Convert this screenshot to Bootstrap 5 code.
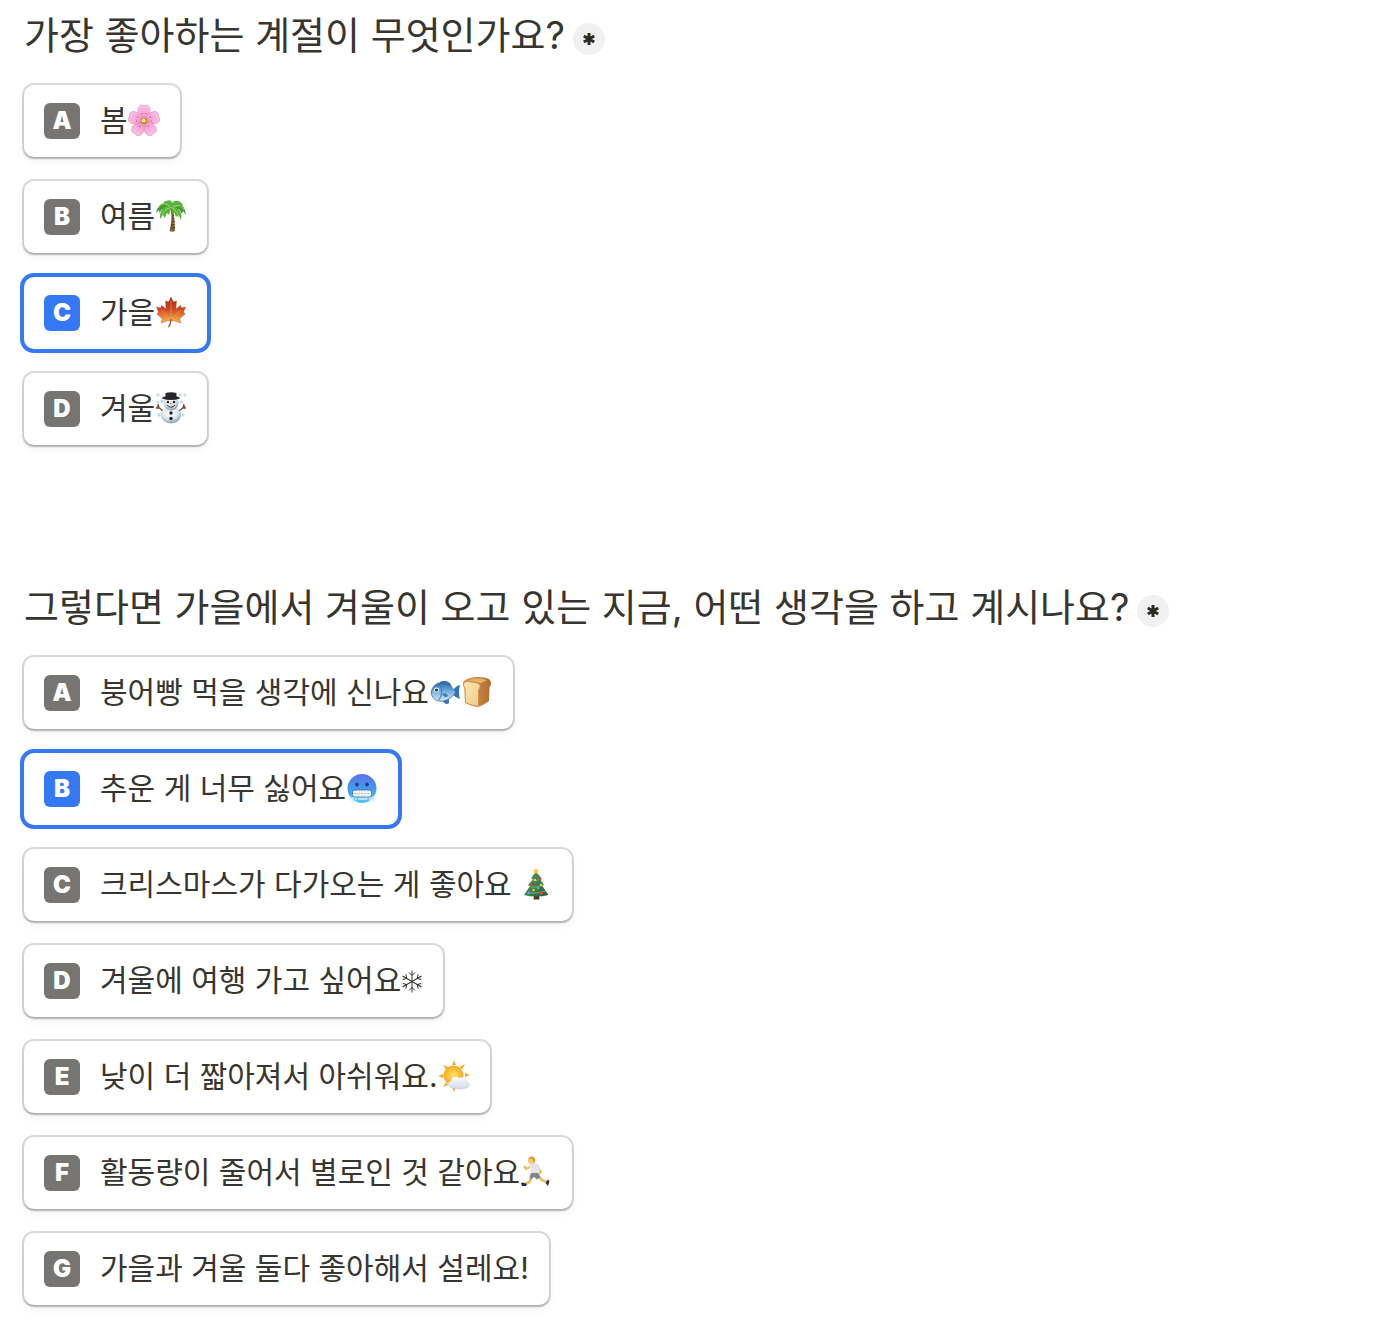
<!DOCTYPE html>
<html lang="ko">
<head>
<meta charset="utf-8">
<meta name="viewport" content="width=device-width, initial-scale=1">
<title>계절 설문</title>
<link href="https://cdn.jsdelivr.net/npm/bootstrap@5.3.0/dist/css/bootstrap.min.css" rel="stylesheet">
<style>
  body { font-family: Inter, "Noto Sans CJK KR", sans-serif; color: #37352f; background: #fff; }
  .survey { padding-top: 11px; padding-bottom: 16px; }
  .question + .question { margin-top: 138px; }
  .question-title { font-size: 38px; line-height: 48px; margin-bottom: 26px; }
  .required-mark { width: 32px; height: 32px; background: #f1f1f1; }
  .choices { gap: 24px; }
  .choice { gap: 20px; padding: 18px 20px; border-radius: 10px; font-size: 30px; cursor: pointer; background: #fff;
    box-shadow: 0 0 0 2px rgba(0,0,0,.14), 0 2px 2px rgba(0,0,0,.15), 0 4px 8px rgba(0,0,0,.06); }
  .choice-key { width: 36px; height: 36px; border-radius: 6px; background: #777571; color: #fff; font-size: 24px; line-height: 36px; font-weight: 900; }
  .choice-text { line-height: 34px; padding-bottom: 2px; }
  .btn-check:checked + .choice { box-shadow: 0 0 0 4px #3578f6; }
  .btn-check:checked + .choice .choice-key { background: #3578f6; }
  .emoji { width: 32px; height: 32px; }
  .emoji-narrow { width: 22px; height: 32px; }
</style>
<script src="https://cdn.jsdelivr.net/npm/bootstrap@5.3.0/dist/js/bootstrap.bundle.min.js"></script>
</head>
<body>
<svg width="0" height="0" class="position-absolute" aria-hidden="true">
  <defs>
    <radialGradient id="petalFill" gradientUnits="userSpaceOnUse" cx="16" cy="17" r="16"><stop offset="0" stop-color="#e07fb2"/><stop offset=".4" stop-color="#f4a0d0"/><stop offset="1" stop-color="#fac4e6"/></radialGradient>
    <linearGradient id="leafFill" x1="0" y1="0" x2="0" y2="1"><stop offset="0" stop-color="#b8231a"/><stop offset=".45" stop-color="#cf4320"/><stop offset="1" stop-color="#f6bb4e"/></linearGradient>
    <radialGradient id="snowFill" cx=".45" cy=".35" r=".65"><stop offset="0" stop-color="#fff"/><stop offset=".6" stop-color="#dde8ef"/><stop offset="1" stop-color="#869dac"/></radialGradient>
    <linearGradient id="fishFill" x1="0" y1="0" x2="0" y2="1"><stop offset="0" stop-color="#2f6fae"/><stop offset=".5" stop-color="#79b4e2"/><stop offset="1" stop-color="#d3e8f4"/></linearGradient>
    <linearGradient id="crumbFill" x1="0" y1="0" x2="1" y2="1"><stop offset="0" stop-color="#fbe6b4"/><stop offset="1" stop-color="#f0cb88"/></linearGradient>
    <linearGradient id="crustFill" x1="0" y1="0" x2="1" y2="0"><stop offset="0" stop-color="#dca055"/><stop offset="1" stop-color="#b06c30"/></linearGradient>
    <linearGradient id="coldFill" x1="0" y1="0" x2="0" y2="1"><stop offset="0" stop-color="#5b74e6"/><stop offset=".5" stop-color="#4797ef"/><stop offset="1" stop-color="#4fc8f6"/></linearGradient>
    <radialGradient id="sunFill"><stop offset="0" stop-color="#ffe45c"/><stop offset="1" stop-color="#f7a928"/></radialGradient>
    <linearGradient id="cloudFill" x1="0" y1="0" x2="0" y2="1"><stop offset="0" stop-color="#fff"/><stop offset="1" stop-color="#cfd9e4"/></linearGradient>
    <linearGradient id="treeFill" x1="0" y1="0" x2="1" y2="1"><stop offset="0" stop-color="#5a9c62"/><stop offset="1" stop-color="#1f6138"/></linearGradient>
    <path id="petal" d="M16 16.500C10.500 13 9 7 10.500 3.500C11.500.8 14.500.3 16 2C17.500.3 20.500.8 21.500 3.500C23 7 21.500 13 16 16.500Z"/>
    <g id="asterisk" stroke="#2c2a25" stroke-width="3"><path d="M7 1V13M1.800 4L12.200 10M1.800 10L12.200 4"/></g>
  </defs>
</svg>

<main class="survey container-fluid px-4">
<form>
  <fieldset class="question">
    <legend class="question-title d-flex align-items-center gap-2">가장 좋아하는 계절이 무엇인가요?
      <span class="required-mark rounded-circle d-inline-flex align-items-center justify-content-center flex-shrink-0 mt-2" role="img" aria-label="필수"><svg width="14" height="14" viewBox="0 0 14 14"><use href="#asterisk"/></svg></span>
    </legend>
    <div class="choices d-flex flex-column align-items-start">
      <div>
        <input class="btn-check" type="radio" name="season" id="season-a">
        <label class="choice d-flex align-items-center" for="season-a"><span class="choice-key text-center flex-shrink-0">A</span><span class="choice-text d-flex align-items-center">봄<svg class="emoji" viewBox="0 0 32 32">
          <g fill="url(#petalFill)" stroke="#dc80b4" stroke-width=".5"><use href="#petal"/><use href="#petal" transform="rotate(72 16 17)"/><use href="#petal" transform="rotate(144 16 17)"/><use href="#petal" transform="rotate(216 16 17)"/><use href="#petal" transform="rotate(288 16 17)"/></g>
          <g fill="#a8386a"><circle cx="14" cy="9.500" r=".6"/><circle cx="18" cy="9.500" r=".6"/><circle cx="22.500" cy="13" r=".6"/><circle cx="23.500" cy="17" r=".6"/><circle cx="20.500" cy="22.500" r=".6"/><circle cx="11.500" cy="22.500" r=".6"/><circle cx="8.500" cy="17" r=".6"/><circle cx="9.500" cy="13" r=".6"/></g>
          <circle cx="16" cy="17" r="3.300" fill="#c98a2c"/><circle cx="15.700" cy="16.500" r="2.100" fill="#fbe26a"/></svg></span></label>
      </div>
      <div>
        <input class="btn-check" type="radio" name="season" id="season-b">
        <label class="choice d-flex align-items-center" for="season-b"><span class="choice-key text-center flex-shrink-0">B</span><span class="choice-text d-flex align-items-center">여름<svg class="emoji" viewBox="0 0 32 32">
          <path d="M15 8C17.500 15 16.500 23 14.500 31Q17 32.500 20 31C19.700 23 19.500 15 17.500 8Z" fill="#8a6238"/>
          <path d="M16.500 13L18.500 12.500M17 16L19 15.500M16.800 19L19.200 18.500M16.500 22L19.500 21.500M16 25L19.500 24.500M15.500 28L19.800 27.500" stroke="#513518" stroke-width="1"/>
          <path d="M16 8C12-1 3 3 1 13L4 10L4.500 13L7 9L8 11L11 7L13 10ZM16 8C23-2 30 5 31 15L28 11L27 14L24 9L22 12L20 8L17 10Z" fill="#429a35"/>
          <path d="M16 8C11 5 4 9 5 19L8 15L9.500 18L12 13L14 15ZM17 8C22 6 28 12 26 20L23.500 15L21 17L19 12L17 14ZM16 9C10 5 6 2 11 1C15-1 17 1 17 3C20-1 26 1 28 5Z" fill="#57b53e"/>
          <path d="M16 8C12 2 6 3 3 8M17 8C22 3 27 6 29 10M15 8C11 8 8 12 7 16M17 8C21 10 23 13 24 17" fill="none" stroke="#9bda62" stroke-width="1"/></svg></span></label>
      </div>
      <div>
        <input class="btn-check" type="radio" name="season" id="season-c" checked>
        <label class="choice d-flex align-items-center" for="season-c"><span class="choice-key text-center flex-shrink-0">C</span><span class="choice-text d-flex align-items-center">가을<svg class="emoji" viewBox="0 0 32 32">
          <path d="M16 1L18.500 6L21.500 5L20.800 13L25.500 9.500L26.500 12L30.500 11L28.500 16L30 18L24.500 23L26 27L18 24.500L16 25L13 24.500L6 27L7.500 23L2 18L3.500 16L1.500 11L5.500 12L6.500 9.500L11.200 13L10.500 5L13.500 6Z" fill="url(#leafFill)" stroke="#a8401f" stroke-width=".4"/>
          <path d="M16 4V24M16 23L6 14M16 23L26 14M16 23L8 25M16 23L24 25" fill="none" stroke="#f0a850" stroke-width=".6"/><path d="M16 23Q16 28 13.500 31" fill="none" stroke="#a4562a" stroke-width="1.300"/></svg></span></label>
      </div>
      <div>
        <input class="btn-check" type="radio" name="season" id="season-d">
        <label class="choice d-flex align-items-center" for="season-d"><span class="choice-key text-center flex-shrink-0">D</span><span class="choice-text d-flex align-items-center">겨울<svg class="emoji" viewBox="0 0 32 32">
          <g fill="#b5ddf8"><circle cx="3" cy="3" r="1.700"/><circle cx="7" cy="9" r="1.700"/><circle cx="3" cy="10" r="1.300"/><circle cx="25" cy="3" r="1.600"/><circle cx="30" cy="3" r="1.400"/><circle cx="26" cy="10" r="1.600"/><circle cx="4" cy="23" r="1.700"/><circle cx="28" cy="23" r="1.500"/></g>
          <path d="M8 19L2 14M4 16L1 16M4 16L3 12M24 19L30 14M28 16L31 16M28 16L29 12" stroke="#754f35" stroke-width="1.400"/>
          <ellipse cx="16" cy="23" rx="10" ry="8.500" fill="url(#snowFill)"/><circle cx="16" cy="11" r="7.500" fill="url(#snowFill)"/>
          <path d="M10.500 1Q16-.5 21.500 1L21.500 4.500Q25 5 25 6.500Q16 9.500 7 6.500Q7 5 10.500 4.500Z" fill="#28262a"/>
          <g fill="#222"><circle cx="13" cy="10" r="1.300"/><circle cx="19" cy="10" r="1.300"/><circle cx="16" cy="21" r="1.700"/><circle cx="16" cy="26.500" r="1.700"/></g><path d="M15 10.500L18 12L15 12.500Z" fill="#ed7a31"/><path d="M12 13Q16 17.500 20 13" fill="none" stroke="#333"/></svg></span></label>
      </div>
    </div>
  </fieldset>

  <fieldset class="question">
    <legend class="question-title d-flex align-items-center gap-2">그렇다면 가을에서 겨울이 오고 있는 지금, 어떤 생각을 하고 계시나요?
      <span class="required-mark rounded-circle d-inline-flex align-items-center justify-content-center flex-shrink-0 mt-2" role="img" aria-label="필수"><svg width="14" height="14" viewBox="0 0 14 14"><use href="#asterisk"/></svg></span>
    </legend>
    <div class="choices d-flex flex-column align-items-start">
      <div>
        <input class="btn-check" type="radio" name="thought" id="thought-a">
        <label class="choice d-flex align-items-center" for="thought-a"><span class="choice-key text-center flex-shrink-0">A</span><span class="choice-text d-flex align-items-center">붕어빵 먹을 생각에 신나요<svg class="emoji" viewBox="0 0 32 32">
          <path d="M9 8Q14 2 21 7L23 11ZM13 24Q17 30 20 27L20 23ZM23 15Q28 9 31 9Q29 16 31 23Q27 22 23 18Z" fill="#3973ad"/>
          <path d="M2 17C3 10 8 6 14 7C20 8 24 12 27 16C22 23 16 26 10 25C5 24 3 21 2 17Z" fill="url(#fishFill)" stroke="#315f90" stroke-width=".7"/>
          <path d="M11 9Q15 16 10 24" fill="none" stroke="#4079ad"/><path d="M13 18Q18 16 19 20Q16 23 13 18Z" fill="#427fb8"/><circle cx="7.500" cy="14" r="2.400" fill="#fff"/><circle cx="7.500" cy="14" r="1.500" fill="#17263b"/></svg><svg class="emoji" viewBox="0 0 32 32">
          <path d="M2 7Q2 4 9 2Q17 0 25 2Q30 3 30 7Q30 10 28.500 11L28 25Q23 29 17 31Q10 30 4 27L3.500 12Q2 10 2 7Z" fill="url(#crustFill)"/>
          <path d="M2.500 8Q3 5 7 5.500L16 7Q20 8 19 11Q18.500 13 17.500 14V30.500Q10 29.500 4.500 26.500L4 12Q2.500 10.500 2.500 8Z" fill="url(#crumbFill)" stroke="#c98b45" stroke-width=".8"/><path d="M7 4.500Q16 1 26 4L20 7Z" fill="#e6b267"/></svg></span></label>
      </div>
      <div>
        <input class="btn-check" type="radio" name="thought" id="thought-b" checked>
        <label class="choice d-flex align-items-center" for="thought-b"><span class="choice-key text-center flex-shrink-0">B</span><span class="choice-text d-flex align-items-center">추운 게 너무 싫어요<svg class="emoji" viewBox="0 0 32 32">
          <circle cx="16" cy="16.500" r="14.500" fill="url(#coldFill)"/><ellipse cx="11" cy="12.500" rx="1.700" ry="2" fill="#173e82"/><ellipse cx="21" cy="12.500" rx="1.700" ry="2" fill="#173e82"/>
          <path d="M3 24L4 31L5.500 27L7 32L8.500 26L10 30L11.500 26L13 28H21L22.500 26L24 31L25.500 26L27 31L29 23L25 25H6Z" fill="#c9effb" opacity=".8"/>
          <rect x="6.500" y="18" width="19" height="7" rx="2.500" fill="#fff" stroke="#34679d" stroke-width=".8"/><path d="M7 21.500H25M10 18V25M13 18V25M16 18V25M19 18V25M22 18V25" stroke="#9bb5cb" stroke-width=".5"/></svg></span></label>
      </div>
      <div>
        <input class="btn-check" type="radio" name="thought" id="thought-c">
        <label class="choice d-flex align-items-center" for="thought-c"><span class="choice-key text-center flex-shrink-0">C</span><span class="choice-text d-flex align-items-center">크리스마스가 다가오는 게 좋아요<svg class="emoji ms-2" viewBox="0 0 32 32">
          <path d="M14 26H19L19.500 31.500H13.500Z" fill="#563719"/><path d="M16 3L21 10L19.500 10.500L24 17L22 17.500L28.500 27Q16 30 4 27L10 18L8 17.500L13 11L11 10.500Z" fill="url(#treeFill)"/>
          <path d="M12 12Q16 14 20 11M10 19Q17 20 23 17M7 25Q17 26 26 23" fill="none" stroke="#8bbd72" stroke-width=".8"/>
          <path d="M16 0L17 2.300L19.500 2.300L17.500 4L18.300 6.500L16 5L13.700 6.500L14.500 4L12.500 2.300H15Z" fill="#f6c634"/>
          <g fill="#e03d52"><circle cx="20" cy="11" r="1.400"/><circle cx="11.500" cy="17" r="1.300"/><circle cx="21.500" cy="25" r="1.700"/></g><g fill="#f5cc49"><circle cx="15" cy="12" r="1.200"/><circle cx="21" cy="17" r="1.200"/><circle cx="13.500" cy="22" r="1.300"/></g><g fill="#55a5e5"><circle cx="18" cy="20" r="1.400"/><circle cx="9" cy="25" r="1.400"/></g></svg></span></label>
      </div>
      <div>
        <input class="btn-check" type="radio" name="thought" id="thought-d">
        <label class="choice d-flex align-items-center" for="thought-d"><span class="choice-key text-center flex-shrink-0">D</span><span class="choice-text d-flex align-items-center">겨울에 여행 가고 싶어요<svg class="emoji-narrow" viewBox="0 0 22 32" fill="none" stroke="#37352f" stroke-width="1">
          <defs><path id="flakeArm" d="M11 17.500V6.500M8 8.500L11 11.500L14 8.500"/></defs>
          <use href="#flakeArm"/><use href="#flakeArm" transform="rotate(60 11 17.500)"/><use href="#flakeArm" transform="rotate(120 11 17.500)"/><use href="#flakeArm" transform="rotate(180 11 17.500)"/><use href="#flakeArm" transform="rotate(240 11 17.500)"/><use href="#flakeArm" transform="rotate(300 11 17.500)"/></svg></span></label>
      </div>
      <div>
        <input class="btn-check" type="radio" name="thought" id="thought-e">
        <label class="choice d-flex align-items-center" for="thought-e"><span class="choice-key text-center flex-shrink-0">E</span><span class="choice-text d-flex align-items-center">낮이 더 짧아져서 아쉬워요.<svg class="emoji" viewBox="0 0 32 32">
          <path d="M16 0L18 5H14ZM27 4L24 9.500L21.500 7ZM5 5L10.500 7L8 9.500ZM0 16L5 14V18ZM32 15L27 13V17ZM5 27L8 22.500L10.500 25ZM16 32L14 27.500H18Z" fill="#f5ab39"/>
          <circle cx="15.500" cy="15.500" r="10" fill="url(#sunFill)"/><path d="M15 28C9 28 9 21.500 13 21.500C13 17 18 15 21 18C25 16 28.500 19 28 21.500C32 21.500 32.500 27 28.500 28Q21 30 15 28Z" fill="url(#cloudFill)" stroke="#c9d1db" stroke-width=".6"/></svg></span></label>
      </div>
      <div>
        <input class="btn-check" type="radio" name="thought" id="thought-f">
        <label class="choice d-flex align-items-center" for="thought-f"><span class="choice-key text-center flex-shrink-0">F</span><span class="choice-text d-flex align-items-center">활동량이 줄어서 별로인 것 같아요<svg class="emoji" viewBox="0 0 32 32">
          <path d="M12 20L9.500 26L5 28M18 20L22 24L27 26" fill="none" stroke="#f0bd5b" stroke-width="2.500" stroke-linejoin="round"/>
          <path d="M1 27L3 26.500L7 28L6 30L2 30ZM25.500 27L28 23.500L29.500 25L28 30Z" fill="#252c5c"/>
          <path d="M10 11L6 13L4 10M18 11L21 16L18.500 18" fill="none" stroke="#f3c15d" stroke-width="2.300" stroke-linejoin="round"/>
          <path d="M9 9L15 7L19 9L20 13L18 19L11 19L11 13Z" fill="#e1e4e9"/><path d="M11 17L18 17L20.500 21L17 23.500L14 21L11 23.500L9.500 21Z" fill="#82868d"/>
          <circle cx="11.500" cy="4.500" r="3.500" fill="#f5c765"/><path d="M8 3Q10-1 14 1Q17 4 14 7L12 3Z" fill="#dca63b"/></svg></span></label>
      </div>
      <div>
        <input class="btn-check" type="radio" name="thought" id="thought-g">
        <label class="choice d-flex align-items-center" for="thought-g"><span class="choice-key text-center flex-shrink-0">G</span><span class="choice-text">가을과 겨울 둘다 좋아해서 설레요!</span></label>
      </div>
    </div>
  </fieldset>
</form>
</main>
</body>
</html>
